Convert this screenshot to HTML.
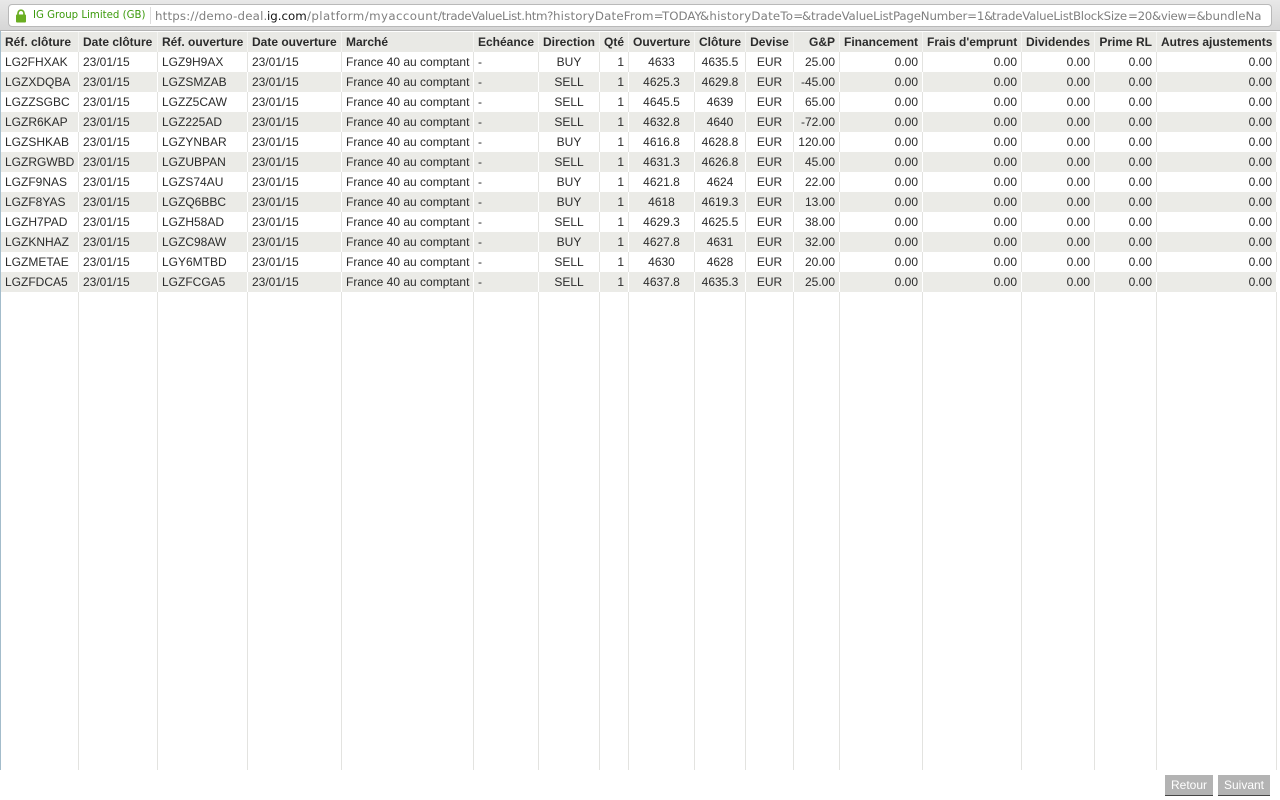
<!DOCTYPE html>
<html lang="fr"><head><meta charset="utf-8"><title>IG</title>
<style>
html,body{margin:0;padding:0;width:1280px;height:800px;overflow:hidden;background:#fff;font-family:"Liberation Sans",sans-serif}
#bar{position:absolute;left:0;top:0;width:1280px;height:31px;background:linear-gradient(#e8e8e8,#d6d6d6);border-bottom:1px solid #b4b4b4;box-sizing:border-box}
#url{position:absolute;left:8px;top:4px;width:1264px;height:23px;box-sizing:border-box;background:#fff;border:1px solid #b9b9b9;border-radius:4px;overflow:hidden}
#lock{position:absolute;left:15px;top:9px}
#org{position:absolute;left:33px;top:9px;font:10.2px/14px "DejaVu Sans",sans-serif;color:#3c9a0c;white-space:nowrap}
#sep{position:absolute;left:150px;top:7px;width:1px;height:17px;background:#ddd}
#addr{position:absolute;left:155px;top:7px;width:1107px;height:18px;overflow:hidden;font:11.8px/18px "DejaVu Sans",sans-serif;color:#808080;white-space:nowrap}
#addr span{position:absolute;top:0}
#addr b{font-weight:normal;color:#111}
#left{position:absolute;left:0;top:31px;width:1px;height:739px;background:#a3bccb}
table{position:absolute;left:1px;top:32px;width:1276px;height:738px;table-layout:fixed;border-collapse:separate;border-spacing:0;font-size:12px;color:#2b2b2b}
th,td{padding:0 4px;box-sizing:border-box;white-space:nowrap;overflow:hidden;border-right:1px solid #e3e3e0;text-align:left;height:20px;line-height:20px}
th{background:#e9e9e5;font-weight:bold;color:#2b2b2b;border-right-color:#f4f4f2}
tr.g td{background:#ebebe7;border-right-color:#fff}
tr.f td{height:478px;background:#fff}
td:nth-child(7),td:nth-child(9),td:nth-child(10),td:nth-child(11){text-align:center}
th:nth-child(7),th:nth-child(9),th:nth-child(10),th:nth-child(11){text-align:center}
td:nth-child(8),td:nth-child(n+12),th:nth-child(8),th:nth-child(n+12){text-align:right}
.btn{position:absolute;top:775px;height:21px;box-sizing:border-box;background:#b3b3b3;border-bottom:1px solid #444;color:#fff;font-size:12px;line-height:21px;text-align:center}
</style></head><body>
<div id="bar"><div id="url"></div>
<svg id="lock" width="12" height="14" viewBox="0 0 12 14"><path d="M3 6V4.2a3 3 0 0 1 6 0V6" fill="none" stroke="#6aae22" stroke-width="1.7"/><rect x="1" y="5.5" width="10" height="8" rx="1" fill="#6aae22"/></svg>
<div id="org">IG Group Limited (GB)</div><div id="sep"></div>
<div id="addr"><span style="left:0;letter-spacing:.18px">https://demo-deal.</span><span style="left:112px"><b>ig.com</b></span><span style="left:152px;letter-spacing:.4px">/platform/myaccount</span><span style="left:283px;letter-spacing:-.35px">/tradeValueList.htm?</span><span style="left:398px;letter-spacing:.18px">historyDateFrom=</span><span style="left:507px">TODAY</span><span style="left:545px;letter-spacing:.2px">&amp;historyDateTo=</span><span style="left:647px;letter-spacing:-.18px">&amp;tradeValueListPageNumber=1&amp;</span><span style="left:837px;letter-spacing:-.25px">tradeValueListBlockSize</span><span style="left:973px;letter-spacing:-.3px">=20&amp;view=&amp;</span><span style="left:1050px">bundleName</span></div></div>
<div id="left"></div>
<table>
<colgroup><col style="width:78px"><col style="width:79px"><col style="width:90px"><col style="width:94px"><col style="width:132px"><col style="width:65px"><col style="width:61px"><col style="width:29px"><col style="width:66px"><col style="width:51px"><col style="width:48px"><col style="width:46px"><col style="width:83px"><col style="width:99px"><col style="width:73px"><col style="width:62px"><col style="width:120px"></colgroup>
<tr><th>Réf. clôture</th><th>Date clôture</th><th>Réf. ouverture</th><th>Date ouverture</th><th>Marché</th><th>Echéance</th><th>Direction</th><th>Qté</th><th>Ouverture</th><th>Clôture</th><th>Devise</th><th>G&amp;P</th><th>Financement</th><th>Frais d'emprunt</th><th>Dividendes</th><th>Prime RL</th><th>Autres ajustements</th></tr>
<tr><td>LG2FHXAK</td><td>23/01/15</td><td>LGZ9H9AX</td><td>23/01/15</td><td>France 40 au comptant</td><td>-</td><td>BUY</td><td>1</td><td>4633</td><td>4635.5</td><td>EUR</td><td>25.00</td><td>0.00</td><td>0.00</td><td>0.00</td><td>0.00</td><td>0.00</td></tr>
<tr class="g"><td>LGZXDQBA</td><td>23/01/15</td><td>LGZSMZAB</td><td>23/01/15</td><td>France 40 au comptant</td><td>-</td><td>SELL</td><td>1</td><td>4625.3</td><td>4629.8</td><td>EUR</td><td>-45.00</td><td>0.00</td><td>0.00</td><td>0.00</td><td>0.00</td><td>0.00</td></tr>
<tr><td>LGZZSGBC</td><td>23/01/15</td><td>LGZZ5CAW</td><td>23/01/15</td><td>France 40 au comptant</td><td>-</td><td>SELL</td><td>1</td><td>4645.5</td><td>4639</td><td>EUR</td><td>65.00</td><td>0.00</td><td>0.00</td><td>0.00</td><td>0.00</td><td>0.00</td></tr>
<tr class="g"><td>LGZR6KAP</td><td>23/01/15</td><td>LGZ225AD</td><td>23/01/15</td><td>France 40 au comptant</td><td>-</td><td>SELL</td><td>1</td><td>4632.8</td><td>4640</td><td>EUR</td><td>-72.00</td><td>0.00</td><td>0.00</td><td>0.00</td><td>0.00</td><td>0.00</td></tr>
<tr><td>LGZSHKAB</td><td>23/01/15</td><td>LGZYNBAR</td><td>23/01/15</td><td>France 40 au comptant</td><td>-</td><td>BUY</td><td>1</td><td>4616.8</td><td>4628.8</td><td>EUR</td><td>120.00</td><td>0.00</td><td>0.00</td><td>0.00</td><td>0.00</td><td>0.00</td></tr>
<tr class="g"><td>LGZRGWBD</td><td>23/01/15</td><td>LGZUBPAN</td><td>23/01/15</td><td>France 40 au comptant</td><td>-</td><td>SELL</td><td>1</td><td>4631.3</td><td>4626.8</td><td>EUR</td><td>45.00</td><td>0.00</td><td>0.00</td><td>0.00</td><td>0.00</td><td>0.00</td></tr>
<tr><td>LGZF9NAS</td><td>23/01/15</td><td>LGZS74AU</td><td>23/01/15</td><td>France 40 au comptant</td><td>-</td><td>BUY</td><td>1</td><td>4621.8</td><td>4624</td><td>EUR</td><td>22.00</td><td>0.00</td><td>0.00</td><td>0.00</td><td>0.00</td><td>0.00</td></tr>
<tr class="g"><td>LGZF8YAS</td><td>23/01/15</td><td>LGZQ6BBC</td><td>23/01/15</td><td>France 40 au comptant</td><td>-</td><td>BUY</td><td>1</td><td>4618</td><td>4619.3</td><td>EUR</td><td>13.00</td><td>0.00</td><td>0.00</td><td>0.00</td><td>0.00</td><td>0.00</td></tr>
<tr><td>LGZH7PAD</td><td>23/01/15</td><td>LGZH58AD</td><td>23/01/15</td><td>France 40 au comptant</td><td>-</td><td>SELL</td><td>1</td><td>4629.3</td><td>4625.5</td><td>EUR</td><td>38.00</td><td>0.00</td><td>0.00</td><td>0.00</td><td>0.00</td><td>0.00</td></tr>
<tr class="g"><td>LGZKNHAZ</td><td>23/01/15</td><td>LGZC98AW</td><td>23/01/15</td><td>France 40 au comptant</td><td>-</td><td>BUY</td><td>1</td><td>4627.8</td><td>4631</td><td>EUR</td><td>32.00</td><td>0.00</td><td>0.00</td><td>0.00</td><td>0.00</td><td>0.00</td></tr>
<tr><td>LGZMETAE</td><td>23/01/15</td><td>LGY6MTBD</td><td>23/01/15</td><td>France 40 au comptant</td><td>-</td><td>SELL</td><td>1</td><td>4630</td><td>4628</td><td>EUR</td><td>20.00</td><td>0.00</td><td>0.00</td><td>0.00</td><td>0.00</td><td>0.00</td></tr>
<tr class="g"><td>LGZFDCA5</td><td>23/01/15</td><td>LGZFCGA5</td><td>23/01/15</td><td>France 40 au comptant</td><td>-</td><td>SELL</td><td>1</td><td>4637.8</td><td>4635.3</td><td>EUR</td><td>25.00</td><td>0.00</td><td>0.00</td><td>0.00</td><td>0.00</td><td>0.00</td></tr>
<tr class="f"><td></td><td></td><td></td><td></td><td></td><td></td><td></td><td></td><td></td><td></td><td></td><td></td><td></td><td></td><td></td><td></td><td></td></tr>
</table>
<div class="btn" style="left:1165px;width:48px">Retour</div>
<div class="btn" style="left:1218px;width:52px">Suivant</div>
</body></html>
